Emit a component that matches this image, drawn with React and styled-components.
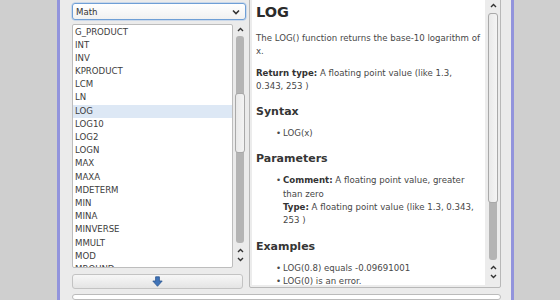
import React from "react";
import styled, { createGlobalStyle } from "styled-components";

const Global = createGlobalStyle`
  html, body { margin: 0; padding: 0; }
  body {
    background: #cfcfcf;
    font-family: "DejaVu Sans", "Liberation Sans", sans-serif;
    overflow: hidden;
  }
`;

const Page = styled.div`
  display: flex;
  width: 560px;
  height: 300px;
  overflow: hidden;
`;

const Gutter = styled.div`
  width: 57px;
  flex: none;
`;

const Dialog = styled.div`
  flex: none;
  background: #ebebeb;
  border-left: 3px solid #9294dc;
  border-right: 3px solid #9294dc;
  padding: 0 10px 0 12px;
  box-sizing: content-box;
  display: flex;
  flex-direction: column;
  width: 429px;
`;

const Main = styled.div`
  display: flex;
  align-items: flex-start;
  gap: 3px;
`;

const LeftCol = styled.div`
  width: 174px;
  flex: none;
  display: flex;
  flex-direction: column;
  padding-top: 3px;
`;

const Combo = styled.div`
  height: 17px;
  box-sizing: border-box;
  border: 1px solid #6f9fd6;
  border-radius: 3px;
  background: linear-gradient(#ffffff, #f1f1f1);
  box-shadow: 0 0 0 0.5px #a9c6ea;
  display: flex;
  align-items: center;
  justify-content: space-between;
  padding: 0 5px 0 3px;
  font-size: 8.6px;
  color: #333;
`;

const ListFrame = styled.div`
  margin-top: 4px;
  height: 244px;
  display: flex;
  gap: 2px;
  padding-right: 1px;
`;

const ListViewport = styled.div`
  flex: 1;
  background: #fff;
  border: 1px solid #bdbdbd;
  border-radius: 2px;
  overflow: hidden;
  padding-top: 0.5px;
`;

const Item = styled.div`
  height: 13.2px;
  line-height: 13.2px;
  padding-left: 2px;
  font-size: 8.6px;
  color: #3c3c3c;
  white-space: nowrap;
  background: ${(p) => (p.$selected ? "#dde8f5" : "transparent")};
`;

const Button = styled.div`
  margin-top: 6px;
  height: 15px;
  box-sizing: border-box;
  border: 1px solid #c3c3c3;
  border-radius: 3px;
  background: linear-gradient(#f7f7f7, #e4e4e4);
  display: flex;
  align-items: center;
  justify-content: center;
  margin-right: 3px;
`;

const RightFrame = styled.div`
  margin-top: -3px;
  width: 252px;
  height: 291px;
  box-sizing: border-box;
  border: 1px solid #b8b8b8;
  border-radius: 2px;
  background: #ececec;
  display: flex;
  gap: 3px;
  padding: 0 2px 2px 2px;
`;

const Doc = styled.div`
  flex: 1;
  background: #fff;
  overflow: hidden;
  padding: 4px 4px 0 4px;
  font-size: 8.6px;
  line-height: 13.3px;
  color: #474747;
`;

const H1 = styled.div`
  font-size: 14.5px;
  font-weight: bold;
  color: #2b2b2b;
  line-height: 18px;
  margin: 1px 0 11px 0;
`;

const P = styled.div`
  margin-bottom: 8px;
`;

const H2 = styled.div`
  font-size: 11px;
  font-weight: bold;
  color: #353535;
  line-height: 15px;
  margin: 11px 0 8px 0;
`;

const B = styled.span`
  font-weight: bold;
  color: #333;
`;

const Bullets = styled.div`
  padding-left: 27px;
`;

const Bullet = styled.div`
  position: relative;
  &::before {
    content: "•";
    position: absolute;
    left: -7px;
    top: 0;
  }
`;

const Bottom = styled.div`
  margin-top: 5px;
  height: 20px;
  background: #fff;
  border: 1px solid #bbbbbb;
  border-radius: 3px;
  box-sizing: border-box;
`;

/* scrollbar */
const Bar = styled.div`
  width: 10px;
  flex: none;
  display: flex;
  flex-direction: column;
  align-items: center;
  padding-bottom: ${(p) => p.$pb}px;
`;

const Arrow = styled.div`
  height: ${(p) => p.$h}px;
  width: 10px;
  display: flex;
  align-items: center;
  justify-content: center;
  flex: none;
`;

const Track = styled.div`
  flex: 1;
  width: 8px;
  position: relative;
  background: #b4b4b4;
  border-radius: 3px;
  margin: 1px 0 3px;
`;

const Thumb = styled.div`
  position: absolute;
  left: -1px;
  right: -1px;
  top: ${(p) => p.$top}px;
  height: ${(p) => p.$h}px;
  background: linear-gradient(90deg, #e9e9e9, #f4f4f4);
  border: 1px solid #a9a9a9;
  border-radius: 3px;
  box-sizing: border-box;
`;

const Chevron = ({ up }) => (
  <svg width="7" height="5" viewBox="0 0 7 5">
    <polyline
      points={up ? "1,4 3.5,1.5 6,4" : "1,1 3.5,3.5 6,1"}
      fill="none"
      stroke="#333"
      strokeWidth="1.4"
    />
  </svg>
);

const Scrollbar = ({ topH, thumbTop, thumbH, pb }) => (
  <Bar $pb={pb}>
    <Arrow $h={topH}>
      <Chevron up />
    </Arrow>
    <Track>
      <Thumb $top={thumbTop} $h={thumbH} />
    </Track>
    <Arrow $h={9}>
      <Chevron up />
    </Arrow>
    <Arrow $h={9}>
      <Chevron />
    </Arrow>
  </Bar>
);

const items = [
  "G_PRODUCT", "INT", "INV", "KPRODUCT", "LCM", "LN", "LOG", "LOG10", "LOG2",
  "LOGN", "MAX", "MAXA", "MDETERM", "MIN", "MINA", "MINVERSE", "MMULT", "MOD", "MROUND",
];

const DownArrow = () => (
  <svg width="11" height="11" viewBox="0 0 11 11">
    <path
      d="M3.6 0.8 H7.4 V5 H10.2 L5.5 10.3 L0.8 5 H3.6 Z"
      fill="#3f73b8"
      stroke="#2b5590"
      strokeWidth="0.8"
      strokeLinejoin="round"
    />
  </svg>
);

export default function App() {
  return (
    <>
      <Global />
      <Page>
        <Gutter />
        <Dialog>
          <Main>
            <LeftCol>
              <Combo>
                <span>Math</span>
                <svg width="8" height="6" viewBox="0 0 8 6">
                  <polyline points="1,1.5 4,4.5 7,1.5" fill="none" stroke="#333" strokeWidth="1.6" />
                </svg>
              </Combo>
              <ListFrame>
                <ListViewport>
                  {items.map((it) => (
                    <Item key={it} $selected={it === "LOG"}>
                      {it}
                    </Item>
                  ))}
                </ListViewport>
                <Scrollbar topH={11} thumbTop={57} thumbH={60} pb={4} />
              </ListFrame>
              <Button>
                <DownArrow />
              </Button>
            </LeftCol>
            <RightFrame>
              <Doc>
                <H1>LOG</H1>
                <P>The LOG() function returns the base-10 logarithm of x.</P>
                <P>
                  <B>Return type:</B> A floating point value (like 1.3, 0.343, 253 )
                </P>
                <H2>Syntax</H2>
                <Bullets>
                  <Bullet>LOG(x)</Bullet>
                </Bullets>
                <H2>Parameters</H2>
                <Bullets>
                  <Bullet>
                    <B>Comment:</B> A floating point value, greater than zero
                    <br />
                    <B>Type:</B> A floating point value (like 1.3, 0.343, 253 )
                  </Bullet>
                </Bullets>
                <H2>Examples</H2>
                <Bullets>
                  <Bullet>LOG(0.8) equals -0.09691001</Bullet>
                  <Bullet>LOG(0) is an error.</Bullet>
                </Bullets>
              </Doc>
              <Scrollbar topH={14} thumbTop={0} thumbH={190} pb={4} />
            </RightFrame>
          </Main>
          <Bottom />
        </Dialog>
        <Gutter />
      </Page>
    </>
  );
}
